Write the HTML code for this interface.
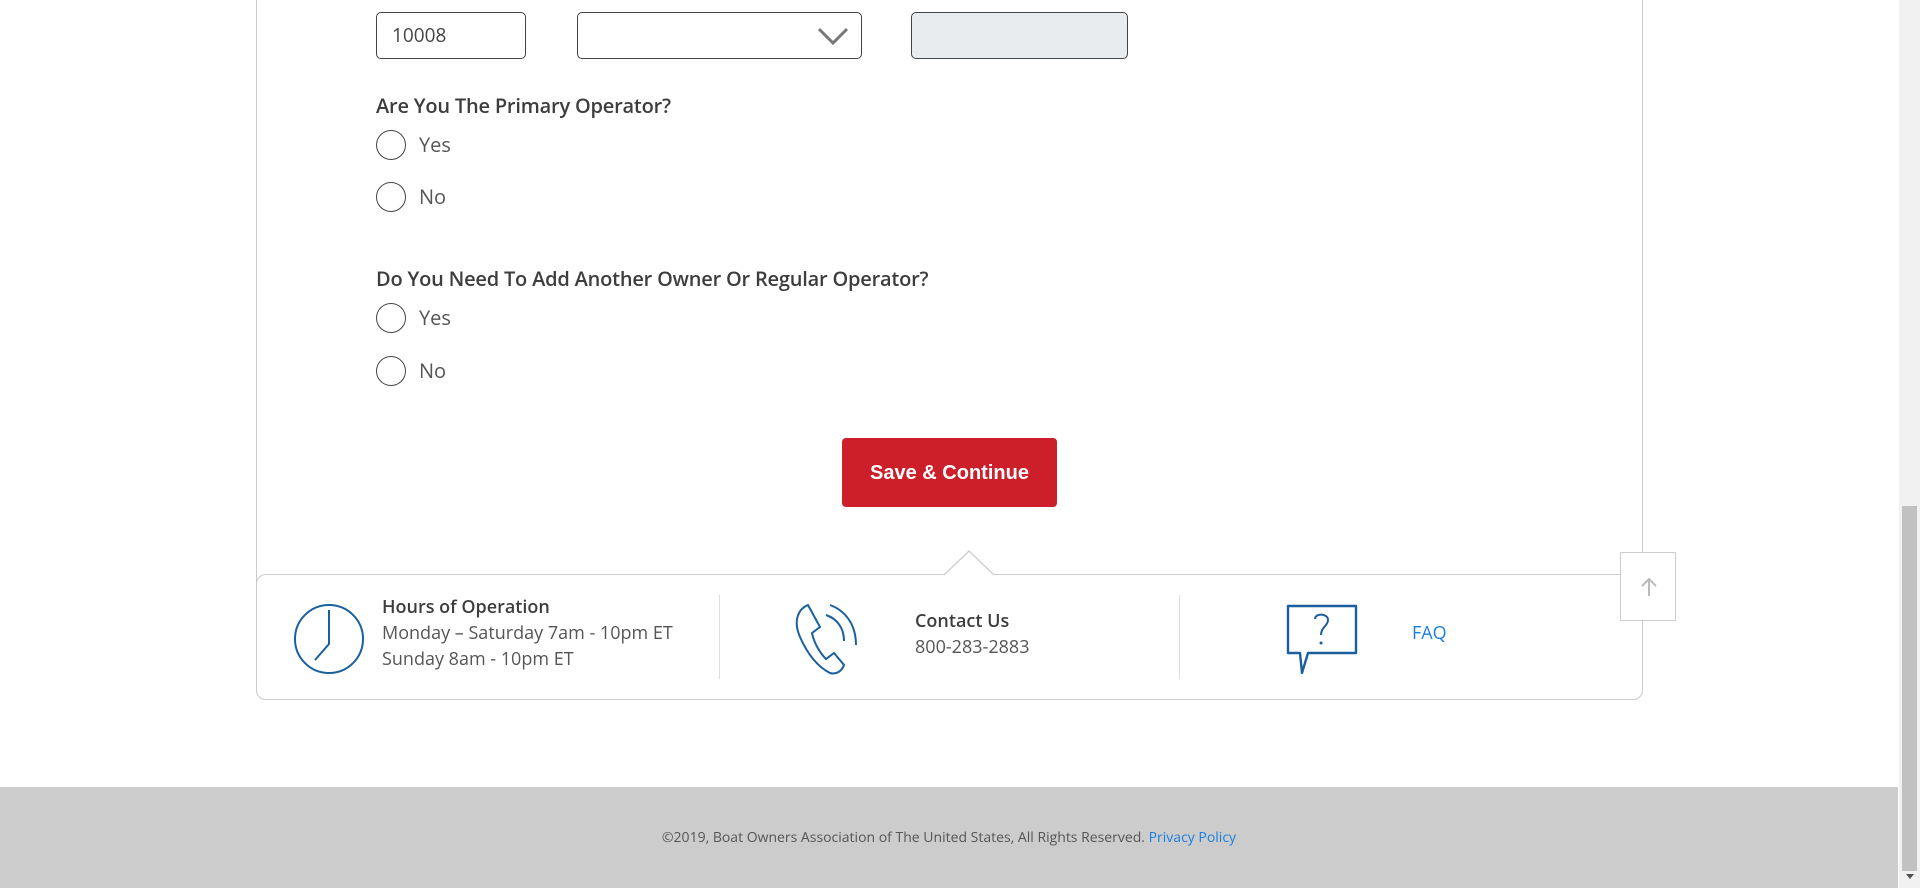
<!DOCTYPE html>
<html><head><meta charset="utf-8"><style>
*{box-sizing:border-box;margin:0;padding:0}
body{width:1920px;height:888px;overflow:hidden;background:#fff;font-family:"Open Sans","Liberation Sans",sans-serif;color:#444;position:relative}
.abs{position:absolute}
.box{position:absolute;border:1px solid #444;border-radius:5px;height:47px;top:12px}
.lbl{position:absolute;left:376px;font-size:20px;font-weight:600;color:#3d3d3d;letter-spacing:-0.2px}
.radio{position:absolute;left:376px;width:30px;height:30px;border:1.3px solid #444;border-radius:50%}
.rt{position:absolute;left:419px;font-size:20px;color:#555}
.ft{font-size:18px;color:#555;line-height:26px}
</style></head><body>
<div class="abs" style="left:256px;top:0;width:1387px;height:700px;border:1px solid #ccc;border-top:none;border-radius:0 0 10px 10px"></div>
<div class="box" style="left:376px;width:150px;padding:0 15px;font-size:19px;line-height:45px;color:#444">10008</div>
<div class="box" style="left:577px;width:285px"><svg class="abs" style="left:238px;top:12px" width="34" height="22" viewBox="0 0 34 22"><path d="M3 4 L17 18 L31 4" fill="none" stroke="#777" stroke-width="3"/></svg></div>
<div class="box" style="left:911px;width:217px;background:#e9ecef"></div>
<div class="lbl" style="top:92px">Are You The Primary Operator?</div>
<div class="radio" style="top:130px"></div><div class="rt" style="top:131px">Yes</div>
<div class="radio" style="top:182px"></div><div class="rt" style="top:183px">No</div>
<div class="lbl" style="top:265px">Do You Need To Add Another Owner Or Regular Operator?</div>
<div class="radio" style="top:303px"></div><div class="rt" style="top:304px">Yes</div>
<div class="radio" style="top:356px"></div><div class="rt" style="top:357px">No</div>
<div class="abs" style="left:842px;top:438px;width:215px;height:69px;background:#cc1f2a;border-radius:4px;color:#fff;font-size:20px;font-weight:700;text-align:center;line-height:70px;font-family:'Liberation Sans',sans-serif">Save &amp; Continue</div>
<div class="abs" style="left:256px;top:574px;width:1387px;height:126px;border:1px solid #ccc;border-radius:10px;background:#fff"></div>
<svg class="abs" style="left:944px;top:550px" width="50" height="26"><path d="M0 25 L25 1 L50 25" fill="#fff" stroke="#ccc" stroke-width="1.3"/><rect x="2" y="24.5" width="46" height="3" fill="#fff"/></svg>
<div class="abs" style="left:719px;top:595px;width:1px;height:84px;background:#ddd"></div>
<div class="abs" style="left:1179px;top:595px;width:1px;height:84px;background:#ddd"></div>
<svg class="abs" style="left:292px;top:602px" width="74" height="74"><circle cx="37" cy="37" r="34" fill="none" stroke="#1a5f9e" stroke-width="2"/><path d="M37 8 V42 L23 58" fill="none" stroke="#1a5f9e" stroke-width="2"/></svg>
<div class="abs ft" style="left:382px;top:594px"><b style="font-weight:600;color:#3d3d3d">Hours of Operation</b><br>Monday – Saturday 7am - 10pm ET<br>Sunday 8am - 10pm ET</div>
<svg class="abs" style="left:794px;top:603px" width="64" height="72" viewBox="0 0 64 72"><path d="M14 2 C4 6 -1 18 6 34 C14 52 24 64 36 70 C42 72 48 68 50 62 L40 50 L32 56 C26 50 20 40 18 30 L26 24 Z" fill="none" stroke="#1a5f9e" stroke-width="2"/><path d="M32 12 C44 16 50 26 50 38" fill="none" stroke="#1a5f9e" stroke-width="2"/><path d="M36 2 C52 8 62 22 62 42" fill="none" stroke="#1a5f9e" stroke-width="2"/></svg>
<div class="abs ft" style="left:915px;top:608px"><b style="font-weight:600;color:#3d3d3d">Contact Us</b><br>800-283-2883</div>
<svg class="abs" style="left:1284px;top:603px" width="76" height="72" viewBox="0 0 76 72"><path d="M4 3 H72 V50 H24 L18 70 L16 50 H4 Z" fill="none" stroke="#1a5f9e" stroke-width="2.4" stroke-linejoin="round"/><path d="M31 16 C31 10 44 10 44 17 C44 23 37 24 37 32" fill="none" stroke="#1a5f9e" stroke-width="2"/><circle cx="37" cy="40" r="1.5" fill="#1a5f9e"/></svg>
<div class="abs" style="left:1412px;top:621px;font-size:18px;color:#1a7fe0">FAQ</div>
<div class="abs" style="left:1620px;top:552px;width:56px;height:69px;border:1px solid #ccc;background:#fff"><svg class="abs" style="left:19px;top:24px" width="18" height="20"><path d="M9 19 V2 M2 9 L9 2 L16 9" fill="none" stroke="#bbb" stroke-width="2"/></svg></div>
<div class="abs" style="left:0;top:787px;width:1898px;height:101px;background:#ccc;text-align:center;font-size:14px;line-height:101px;color:#555">©2019, Boat Owners Association of The United States, All Rights Reserved. <span style="color:#1a7fe0">Privacy Policy</span></div>
<div class="abs" style="left:1899px;top:0;width:21px;height:888px;background:#f1f1f1"></div>
<div class="abs" style="left:1902px;top:506px;width:15px;height:365px;background:#c1c1c1"></div>
<svg class="abs" style="left:1904px;top:872px" width="12" height="10"><path d="M2 2 L10 2 L6 7 Z" fill="#505050"/></svg>
</body></html>
